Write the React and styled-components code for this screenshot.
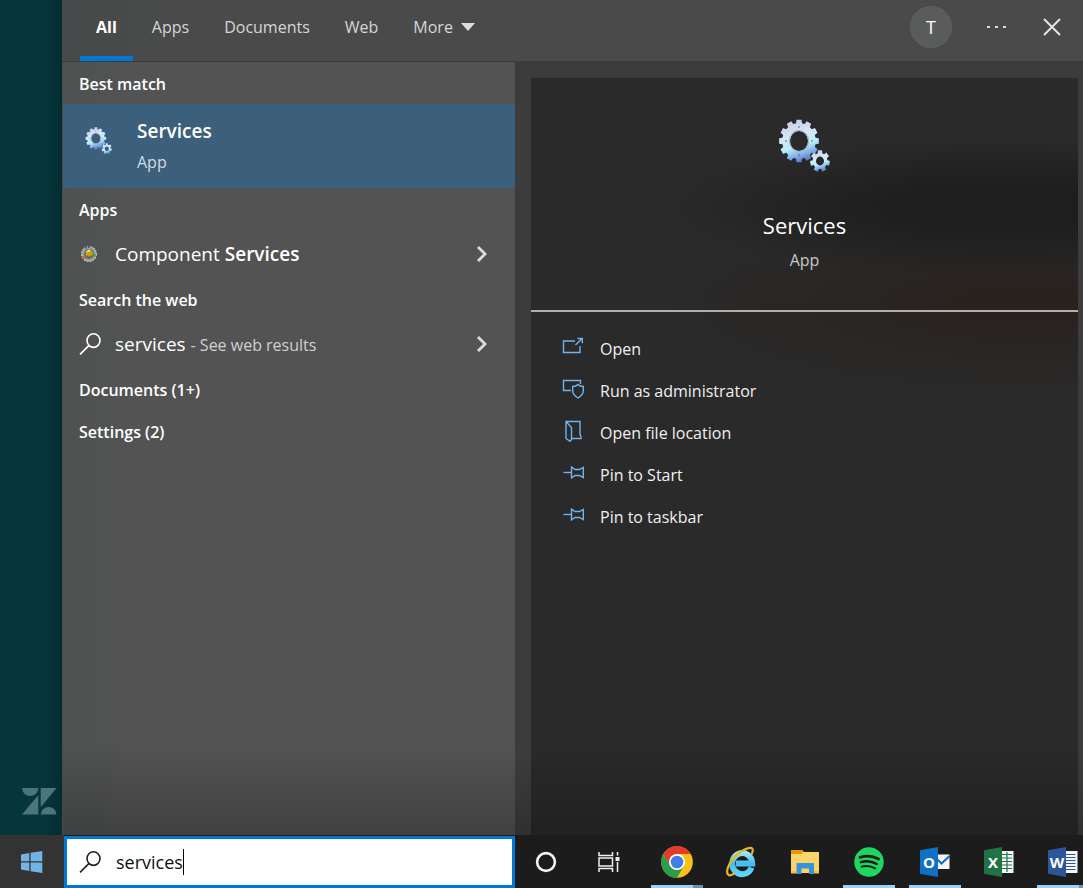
import React from 'react';
import styled, { createGlobalStyle } from 'styled-components';

const GlobalStyle = createGlobalStyle`
  * {
    box-sizing: border-box;
  }
  body {
    margin: 0;
    background: #05353a;
    color: #fff;
    font-family: "Segoe UI", "Open Sans", "Noto Sans", sans-serif;
    font-size: 16px;
    line-height: 24px;
  }
  button {
    border: 0;
    padding: 0;
    background: none;
    color: inherit;
    font: inherit;
    text-align: left;
  }
  h1, h2, p, ul {
    margin: 0;
    padding: 0;
    font-size: 16px;
    list-style: none;
  }
  svg {
    display: block;
    flex: none;
  }
`;

const Screen = styled.div`
  display: flex;
  flex-direction: column;
  min-height: 100vh;
  overflow: hidden;
`;

const Main = styled.div`
  flex: 1;
  display: flex;
`;

const Desktop = styled.div`
  width: 62px;
  display: flex;
  align-items: flex-end;
  padding: 0 6px 20px 22px;
  background: linear-gradient(90deg, #05363b 70%, #042d32);
`;

const Flyout = styled.section`
  flex: 1;
  min-width: 0;
  display: flex;
  flex-direction: column;
  background: linear-gradient(#3c3c3c 90%, #303030);
`;

const TopBar = styled.header`
  height: 62px;
  display: flex;
  justify-content: space-between;
  padding: 0 21px 0 18px;
  background: linear-gradient(90deg, #474a4a, #4a4a4a 12%);
  border-bottom: 1px solid #3b3b3b;
`;

const Tabs = styled.nav`
  display: flex;
  gap: 3px;
`;

const Tab = styled.button`
  display: flex;
  align-items: center;
  gap: 8px;
  padding: 0 16px 2px;
  border-bottom: 5px solid ${props => (props.$active ? '#0078d7' : 'transparent')};
  color: ${props => (props.$active ? '#fff' : '#d6d6d6')};
  font-weight: ${props => (props.$active ? 700 : 400)};
`;

const Tools = styled.div`
  display: flex;
  align-items: center;
  gap: 35px;
  padding-bottom: 8px;
`;

const Avatar = styled.button`
  width: 42px;
  height: 42px;
  border-radius: 50%;
  background: #595c5b;
  border: 1px solid #5f6161;
  font-size: 18px;
  text-align: center;
`;

const Columns = styled.div`
  flex: 1;
  display: flex;
  gap: 16px;
  padding-right: 5px;
`;

const Results = styled.div`
  flex: 0 1 453px;
  border-left: 1px solid #4a4a4a;
  background:
    linear-gradient(transparent 88%, rgba(0, 0, 0, 0.22)),
    linear-gradient(90deg, #4f5251, #535353 18%);
`;

const Heading = styled.h2`
  height: 42px;
  padding: 10px 16px 8px;
  font-weight: 600;
`;

const BestMatch = styled.button`
  width: 100%;
  height: 84px;
  display: flex;
  align-items: center;
  gap: 24px;
  padding: 0 22px;
  background: #3c5f7b;

  svg {
    margin-bottom: 10px;
  }
`;

const BestText = styled.span`
  display: flex;
  flex-direction: column;
  gap: 7px;
  color: #d3dbe1;

  strong {
    color: #fff;
    font-size: 19px;
    font-weight: 600;
  }
`;

const Result = styled.button`
  width: 100%;
  height: 48px;
  display: flex;
  align-items: center;
  padding: 0 27px 0 16px;
  font-size: 19px;

  strong {
    font-weight: 600;
  }
  small {
    color: #d0d0d0;
    font-size: 16px;
  }
`;

const ResultIcon = styled.span`
  width: 36px;
`;

const ResultLabel = styled.span`
  flex: 1;
`;

const Details = styled.div`
  flex: 1;
  margin-top: 16px;
  background:
    linear-gradient(transparent 88%, rgba(0, 0, 0, 0.22)),
    radial-gradient(ellipse 340px 70px at 86% 17%, #1e1e1e 30%, transparent),
    radial-gradient(ellipse 360px 90px at 90% 30%, #292320 20%, transparent),
    #2a2a2a;
`;

const Summary = styled.div`
  height: 234px;
  display: flex;
  flex-direction: column;
  align-items: center;
  padding-top: 41px;
  border-bottom: 2px solid #b2aeab;

  h1 {
    margin-top: 36px;
    font-size: 22px;
    font-weight: 400;
    line-height: 32px;
  }
  p {
    margin-top: 7px;
    color: #c8c8c8;
  }
`;

const Actions = styled.ul`
  padding: 16px 30px;
`;

const Action = styled.button`
  width: 100%;
  height: 42px;
  display: flex;
  align-items: center;
  gap: 16px;
  color: #f0f0f0;

  svg {
    margin-bottom: 4px;
  }
`;

const Taskbar = styled.footer`
  height: 53px;
  display: flex;
  background: #1c1c1c;
`;

const StartButton = styled.button`
  width: 64px;
  flex: none;
  display: flex;
  align-items: center;
  padding-left: 21px;
  background: #333;
`;

const SearchBox = styled.label`
  flex: 0 0 451px;
  display: flex;
  align-items: center;
  margin-top: 1px;
  padding: 0 12px;
  border: 3px solid #0078d7;
  background: #fff;
  color: #222;
`;

const SearchInput = styled.input`
  field-sizing: content;
  margin-left: 15px;
  padding: 0;
  border: 0;
  outline: 0;
  background: none;
  color: #111;
  font: inherit;
  font-size: 18px;
`;

const Caret = styled.span`
  width: 1px;
  height: 26px;
  background: #000;
`;

const AppGroup = styled.div`
  display: flex;
  gap: 12px;
  padding-left: ${props => props.$offset}px;
`;

const underline = {
  single: '#99d1f7',
  stacked: '#99d1f7 80%, #6b93ae 80%',
};

const AppButton = styled.button`
  width: 52px;
  flex: none;
  display: flex;
  align-items: center;
  justify-content: center;
  background: ${props => (props.$open ? `linear-gradient(90deg, ${underline[props.$open]}${props.$open === 'single' ? ', #99d1f7' : ''}) bottom / 100% 3px no-repeat` : 'none')};
`;

function gearPath(cx, cy, rx, ry, teeth, root) {
  const points = [];
  const step = (Math.PI * 2) / teeth;
  for (let i = 0; i < teeth; i++) {
    const mid = i * step - Math.PI / 2;
    [[-0.34, root], [-0.24, 1], [0.24, 1], [0.34, root]].forEach(([turn, r]) => {
      const a = mid + turn * step;
      points.push(`${(cx + Math.cos(a) * rx * r).toFixed(2)} ${(cy + Math.sin(a) * ry * r).toFixed(2)}`);
    });
  }
  return `M${points.join('L')}Z`;
}

function holePath(cx, cy, rx, ry) {
  return `M${cx - rx} ${cy}a${rx} ${ry} 0 1 0 ${rx * 2} 0a${rx} ${ry} 0 1 0 ${-rx * 2} 0Z`;
}

function Gears({ id, width, height }) {
  return (
    <svg width={width} height={height} viewBox="0 0 52 54" aria-hidden="true">
      <defs>
        <linearGradient id={id} x1="0.3" y1="0" x2="0.6" y2="1">
          <stop offset="0" stopColor="#c3cdea" />
          <stop offset="0.35" stopColor="#d6e6f7" />
          <stop offset="0.62" stopColor="#b8effa" />
          <stop offset="0.82" stopColor="#82aeea" />
          <stop offset="1" stopColor="#4f76b2" />
        </linearGradient>
      </defs>
      <path fill={`url(#${id})`} fillRule="evenodd" d={gearPath(20, 22, 20, 21.5, 12, 0.84) + holePath(20, 22, 9, 10)} />
      <ellipse cx="20" cy="22" rx="9.7" ry="10.6" fill="none" stroke="#a3b6c2" strokeWidth="1" />
      <g fill="#4b6076">
        <circle cx="20" cy="8" r="0.8" />
        <circle cx="20" cy="36" r="0.8" />
        <circle cx="7" cy="22" r="0.8" />
        <circle cx="33" cy="22" r="0.8" />
      </g>
      <path fill={`url(#${id})`} fillRule="evenodd" d={gearPath(41, 42, 10, 11, 7, 0.74) + holePath(41, 42, 4, 4.4)} />
    </svg>
  );
}

function SearchIcon() {
  return (
    <svg width="22" height="22" viewBox="0 0 22 22" fill="none" stroke="currentColor" strokeWidth="1.6" aria-hidden="true">
      <ellipse cx="14.5" cy="7.6" rx="6.5" ry="6.8" />
      <path d="M9.8 12.6L1 21.4" />
    </svg>
  );
}

function Chevron() {
  return (
    <svg width="12" height="18" viewBox="0 0 12 18" fill="none" stroke="#ddd" strokeWidth="2.8" aria-hidden="true">
      <path d="M2 2L9 9L2 16" />
    </svg>
  );
}

function ComponentIcon() {
  return (
    <svg width="20" height="18" viewBox="0 0 20 18" aria-hidden="true">
      <circle cx="10" cy="9" r="7.4" fill="#9b9b98" stroke="#c9c9c4" strokeWidth="1.2" strokeDasharray="2 1" />
      <circle cx="10" cy="9" r="5" fill="#676a5d" />
      <path d="M6.5 7L10.5 4L14 7L13.6 10L10 11.6L6.5 10Z" fill="#c79d16" />
      <path d="M6.5 7L10.5 4L11 7Z" fill="#f4dc72" />
      <path d="M6 1.6h2v2H6zM9 1h2v2H9z" fill="#4659dd" />
      <path d="M14.6 9.2h2.6v2.4h-2.6z" fill="#35b53b" />
      <path d="M3.4 11.6h2.2v2.2H3.4z" fill="#d8483c" />
    </svg>
  );
}

const actionShapes = {
  open: (
    <>
      <path d="M14 5H2.5V16.5H19V10" />
      <path d="M14.5 9L21 2.6M16.5 2.5H21.300V7.300" />
    </>
  ),
  admin: (
    <>
      <path d="M10 12.5H2.500V2.5H19.500V6" />
      <path d="M17 6.500C15.500 8 13.500 8.500 11.700 8.500V12.500C11.700 16.500 14.500 18.500 17 20C19.500 18.500 22.300 16.500 22.300 12.500V8.500C20.500 8.500 18.500 8 17 6.500Z" />
    </>
  ),
  folder: (
    <>
      <path d="M10 18.500H20V16.500L19 14.500V1.500H5V18.500L9 21.300L10.500 19.500V7.500L5.300 1.800" />
    </>
  ),
  pin: (
    <>
      <path d="M2.500 10.500H10.500" />
      <path d="M10.500 5V16L14 13.500H18.500L22.300 15.500V5.500L18.500 7.500H14Z" />
    </>
  ),
};

function ActionIcon({ name }) {
  return (
    <svg width="23" height="22" viewBox="0 0 23 22" fill="none" stroke="#70b4ec" strokeWidth="1.4" aria-hidden="true">
      {actionShapes[name]}
    </svg>
  );
}

function ZendeskLogo() {
  return (
    <svg width="35" height="27" viewBox="0 0 35 27" fill="#4b7579" aria-hidden="true">
      <path d="M0 0H16.300A8.150 8 0 0 1 0 0ZM16.300 7V26.500H0ZM18.700 0H34.600L18.700 19.300ZM18.700 26.500A8 8.500 0 0 1 34.600 26.500Z" />
    </svg>
  );
}

function WindowsLogo() {
  return (
    <svg width="22" height="22" viewBox="0 0 22 22" fill="#73b3e3" aria-hidden="true">
      <path d="M0 3.400L8.300 2V10.300H0ZM9.600 1.800L21.300 0V10.300H9.600ZM0 11.600H8.300V20L0 18.600ZM9.600 11.600H21.300V22L9.600 20.200Z" />
    </svg>
  );
}

function CortanaIcon() {
  return (
    <svg width="22" height="22" viewBox="0 0 22 22" aria-hidden="true">
      <circle cx="11" cy="11" r="8.900" fill="none" stroke="#f4f4f4" strokeWidth="2.600" />
    </svg>
  );
}

function TaskViewIcon() {
  return (
    <svg width="24" height="22" viewBox="0 0 24 22" fill="none" stroke="#f0f0f0" strokeWidth="1.500" aria-hidden="true">
      <path d="M1 1V4.500H14.500V1M1 21V17.500H14.500V21M1 7H14.500V15H1ZM19.500 1V4.500M19.500 11V21" />
      <path fill="#f0f0f0" stroke="none" d="M17.500 6H21.500V10H17.500Z" />
    </svg>
  );
}

function ChromeIcon() {
  return (
    <svg width="32" height="32" viewBox="0 0 32 32" aria-hidden="true">
      <circle cx="16" cy="16" r="15.800" fill="#fbc116" />
      <path d="M2.300 8A15.800 15.800 0 0 1 29.700 8H16L9 20Z" fill="#e33b2e" />
      <path d="M2.300 8A15.800 15.800 0 0 0 16 31.800L22.900 20H9.100Z" fill="#2a9d49" />
      <circle cx="16" cy="16" r="8" fill="#fff" />
      <circle cx="16" cy="16" r="6.300" fill="#3f7de8" />
    </svg>
  );
}

function ExplorerBrowserIcon() {
  return (
    <svg width="30" height="32" viewBox="0 0 30 32" fill="none" aria-hidden="true">
      <defs>
        <linearGradient id="ie-blue" x1="0" y1="0" x2="0" y2="1">
          <stop offset="0" stopColor="#9be4fb" />
          <stop offset="0.5" stopColor="#43b9ee" />
          <stop offset="1" stopColor="#5fd6fa" />
        </linearGradient>
      </defs>
      <path d="M25.500 21.500A10 10.500 0 1 1 26.200 17.500H10" stroke="url(#ie-blue)" strokeWidth="6" />
      <path d="M25.500 8.500C29 1 25 0 16 5C5 11.500 -1 24 2 28.500C3 30 6 29 9 27" stroke="#e9b91c" strokeWidth="2.200" />
    </svg>
  );
}

function FolderIcon() {
  return (
    <svg width="30" height="26" viewBox="0 0 30 26" aria-hidden="true">
      <path d="M1 1H12L14 3H29V24H1Z" fill="#fcd56a" />
      <path d="M1 1H12L13 3L12 5H1Z" fill="#e59a0c" />
      <path d="M6.500 25V14H24V25H19V19.500H11.500V25Z" fill="#3794dc" />
      <path d="M1 22H6.500V24.500H1ZM24 22H29V24.500H24Z" fill="#f3bf45" />
    </svg>
  );
}

function SpotifyIcon() {
  return (
    <svg width="30" height="30" viewBox="0 0 30 30" fill="none" stroke="#191c1a" strokeLinecap="round" aria-hidden="true">
      <circle cx="15" cy="15" r="14.700" fill="#1ed760" stroke="none" />
      <path d="M6 10.300C12 8.500 19.500 9.200 24.500 12" strokeWidth="2.800" />
      <path d="M6.800 15.200C12 13.600 18 14.300 22.800 17" strokeWidth="2.300" />
      <path d="M7.500 19.700C12 18.500 17 19 21.200 21.400" strokeWidth="1.900" />
    </svg>
  );
}

function OfficeIcon({ letter, color, children }) {
  return (
    <svg width="30" height="30" viewBox="0 0 30 30" aria-hidden="true">
      {children}
      <path d="M0 3.200L18 0V30L0 26.800Z" fill={color} />
      <text x="9" y="20.500" textAnchor="middle" fill="#fff" fontFamily="Open Sans, sans-serif" fontSize="15" fontWeight="700">
        {letter}
      </text>
    </svg>
  );
}

function OutlookIcon() {
  return (
    <OfficeIcon letter="O" color="#0f70c5">
      <path d="M17 7.500H29.500V22H17Z" fill="#f4f8fc" />
      <path d="M17 12L21.500 16.500L29.500 9" fill="none" stroke="#0f70c5" strokeWidth="2" />
    </OfficeIcon>
  );
}

function ExcelIcon() {
  return (
    <OfficeIcon letter="X" color="#217346">
      <path d="M17 4H29.500V26H17Z" fill="#f4f8f5" />
      <path d="M18 7.500H28M18 11H28M18 14.500H28M18 18H28M18 21.500H28M23 5V25" stroke="#217346" strokeWidth="1.200" />
    </OfficeIcon>
  );
}

function WordIcon() {
  return (
    <OfficeIcon letter="W" color="#2b579a">
      <path d="M17 4H29.500V26H17Z" fill="#f4f6fb" />
      <path d="M18 7.500H27.500M18 10.500H27.500M18 13.500H27.500M18 16.500H27.500M18 19.500H27.500M18 22.500H27.500" stroke="#2b579a" strokeWidth="1.200" />
    </OfficeIcon>
  );
}

const actions = [
  { label: 'Open', icon: 'open' },
  { label: 'Run as administrator', icon: 'admin' },
  { label: 'Open file location', icon: 'folder' },
  { label: 'Pin to Start', icon: 'pin' },
  { label: 'Pin to taskbar', icon: 'pin' },
];

const taskbarGroups = [
  {
    offset: 5,
    apps: [
      { name: 'Cortana', Icon: CortanaIcon },
      { name: 'Task View', Icon: TaskViewIcon },
    ],
  },
  {
    offset: 15,
    apps: [
      { name: 'Chrome', Icon: ChromeIcon, open: 'stacked' },
      { name: 'Internet Explorer', Icon: ExplorerBrowserIcon },
      { name: 'File Explorer', Icon: FolderIcon },
      { name: 'Spotify', Icon: SpotifyIcon, open: 'single' },
    ],
  },
  {
    offset: 14,
    apps: [
      { name: 'Outlook', Icon: OutlookIcon, open: 'single' },
      { name: 'Excel', Icon: ExcelIcon },
      { name: 'Word', Icon: WordIcon, open: 'stacked' },
    ],
  },
];

function Header() {
  return (
    <TopBar>
      <Tabs>
        <Tab $active>All</Tab>
        <Tab>Apps</Tab>
        <Tab>Documents</Tab>
        <Tab>Web</Tab>
        <Tab>
          More
          <svg width="14" height="8" viewBox="0 0 14 8" fill="#ddd" aria-hidden="true">
            <path d="M0 0H14L7 8Z" />
          </svg>
        </Tab>
      </Tabs>
      <Tools>
        <Avatar>T</Avatar>
        <button aria-label="Options">
          <svg width="20" height="4" viewBox="0 0 20 4" fill="#ddd" aria-hidden="true">
            <path d="M0 1h3v2H0zM8 1h3v2H8zM16 1h3v2H16z" />
          </svg>
        </button>
        <button aria-label="Close">
          <svg width="20" height="20" viewBox="0 0 20 20" stroke="#e4e4e4" strokeWidth="2" aria-hidden="true">
            <path d="M2 2L18 18M18 2L2 18" />
          </svg>
        </button>
      </Tools>
    </TopBar>
  );
}

function ResultList() {
  return (
    <Results>
      <Heading>Best match</Heading>
      <BestMatch>
        <Gears id="gears-small" width={28} height={28} />
        <BestText>
          <strong>Services</strong>
          <span>App</span>
        </BestText>
      </BestMatch>
      <Heading>Apps</Heading>
      <Result>
        <ResultIcon><ComponentIcon /></ResultIcon>
        <ResultLabel>Component <strong>Services</strong></ResultLabel>
        <Chevron />
      </Result>
      <Heading>Search the web</Heading>
      <Result>
        <ResultIcon><SearchIcon /></ResultIcon>
        <ResultLabel>services <small>- See web results</small></ResultLabel>
        <Chevron />
      </Result>
      <Heading>Documents (1+)</Heading>
      <Heading>Settings (2)</Heading>
    </Results>
  );
}

function DetailPane() {
  return (
    <Details>
      <Summary>
        <Gears id="gears-large" width={54} height={54} />
        <h1>Services</h1>
        <p>App</p>
      </Summary>
      <Actions>
        {actions.map(action => (
          <li key={action.label}>
            <Action>
              <ActionIcon name={action.icon} />
              {action.label}
            </Action>
          </li>
        ))}
      </Actions>
    </Details>
  );
}

export default function App() {
  return (
    <>
      <GlobalStyle />
      <Screen>
        <Main>
          <Desktop>
            <ZendeskLogo />
          </Desktop>
          <Flyout>
            <Header />
            <Columns>
              <ResultList />
              <DetailPane />
            </Columns>
          </Flyout>
        </Main>
        <Taskbar>
          <StartButton aria-label="Start"><WindowsLogo /></StartButton>
          <SearchBox>
            <SearchIcon />
            <SearchInput type="text" aria-label="Search" defaultValue="services" />
            <Caret />
          </SearchBox>
          {taskbarGroups.map((group, i) => (
            <AppGroup key={i} $offset={group.offset}>
              {group.apps.map(({ name, Icon, open }) => (
                <AppButton key={name} aria-label={name} $open={open}>
                  <Icon />
                </AppButton>
              ))}
            </AppGroup>
          ))}
        </Taskbar>
      </Screen>
    </>
  );
}
